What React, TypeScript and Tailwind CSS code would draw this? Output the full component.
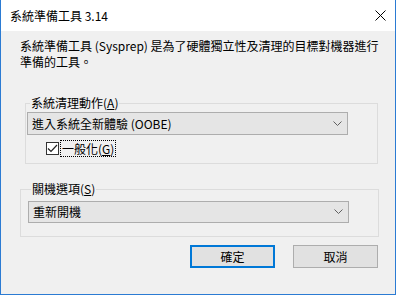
import React from "react";

const font = { fontFamily: '"Noto Sans CJK TC", "Noto Sans", sans-serif' };

function Chevron() {
  return (
    <svg width="9" height="6" viewBox="0 0 9 6" className="mr-[5px]">
      <path d="M0.5 0.5 L4.5 4.5 L8.5 0.5" fill="none" stroke="#606060" strokeWidth="1" />
    </svg>
  );
}

function Combo({ text, h }: { text: string; h: string }) {
  return (
    <div
      className={`flex items-center justify-between w-[321px] ${h} bg-[#e5e5e5] border border-[#adadad] pl-[4px] text-[12px] leading-[16px] text-black`}
    >
      <span>{text}</span>
      <Chevron />
    </div>
  );
}

function GroupBox({
  label,
  hotkey,
  className,
  children,
}: {
  label: string;
  hotkey: string;
  className: string;
  children: React.ReactNode;
}) {
  return (
    <fieldset className={`border border-[#dcdcdc] ${className}`}>
      <legend className="ml-[3px] px-[1px] text-[12px] leading-[16px] text-black">
        {label}(<span className="underline">{hotkey}</span>)
      </legend>
      {children}
    </fieldset>
  );
}

export default function App() {
  return (
    <div
      className="w-[396px] h-[295px] flex flex-col border-x border-b border-[#2b7bd3] bg-[#f0f0f0] overflow-hidden"
      style={font}
    >
      <div className="h-[31px] bg-white flex items-center justify-between pl-[9px] pr-[9px] shrink-0">
        <span className="text-[12px] leading-[16px] text-black">系統準備工具 3.14</span>
        <svg width="11" height="11" viewBox="0 0 11 11">
          <path d="M0.5 0.5 L10.5 10.5 M10.5 0.5 L0.5 10.5" stroke="#000" strokeWidth="1" />
        </svg>
      </div>

      <div className="flex flex-col pl-[19px]">
        <p className="pt-[7px] text-[12px] leading-[16px] text-black whitespace-nowrap">
          系統準備工具 (Sysprep) 是為了硬體獨立性及清理的目標對機器進行
          <br />
          準備的工具。
        </p>

        <GroupBox label="系統清理動作" hotkey="A" className="mt-[25px] ml-[5px] w-[353px] pl-[1px] pb-[6px]">
          <div className="mt-[1px]">
            <Combo text="進入系統全新體驗 (OOBE)" h="h-[23px]" />
          </div>
          <div className="mt-[5px] ml-[19px] flex items-center h-[17px]">
            <div className="w-[13px] h-[13px] border border-[#333] bg-white flex items-center justify-center">
              <svg width="11" height="9" viewBox="0 0 11 9">
                <path d="M1 4.5 L4 7.5 L10 1" fill="none" stroke="#222" strokeWidth="1.2" />
              </svg>
            </div>
            <span className="ml-[1px] px-[1px] h-[17px] border border-dotted border-black text-[12px] leading-[15px] text-black">
              一般化(<span className="underline">G</span>)
            </span>
          </div>
        </GroupBox>

        <GroupBox label="關機選項" hotkey="S" className="mt-[17px] w-[359px] pl-[7px] pb-[13px]">
          <div className="mt-[4px]">
            <Combo text="重新開機" h="h-[22px]" />
          </div>
        </GroupBox>
      </div>

      <div className="mt-[8px] flex justify-end gap-[18px] pr-[17px]">
        <button className="w-[85px] h-[23px] bg-[#e1e1e1] border-2 border-[#0078d7] text-[12px] leading-[16px] text-black">
          確定
        </button>
        <button className="w-[85px] h-[23px] bg-[#e1e1e1] border border-[#adadad] text-[12px] leading-[16px] text-black">
          取消
        </button>
      </div>
    </div>
  );
}
